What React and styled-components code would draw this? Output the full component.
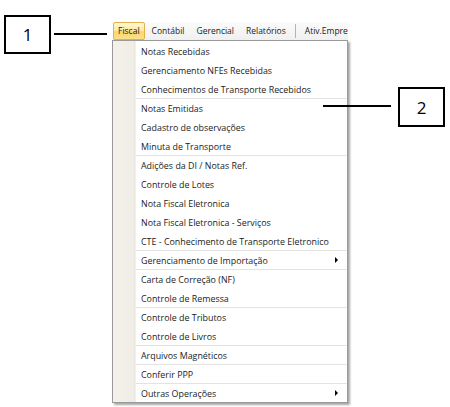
import React from "react";
import styled, { createGlobalStyle } from "styled-components";

const Global = createGlobalStyle`
  html, body { margin: 0; padding: 0; background: #fff; }
  body { font-family: "Open Sans", "Noto Sans", sans-serif; }
`;

const Page = styled.div`
  position: relative;
  width: 450px;
  height: 407px;
  overflow: hidden;
  background: #fff;
`;

const MenuArea = styled.div`
  padding: 22px 0 0 112px;
  width: 236px;
`;

const MenuBar = styled.div`
  display: flex;
  align-items: center;
  gap: 2px;
  height: 18px;
  margin-left: 1px;
  width: 235px;
  overflow: hidden;
  white-space: nowrap;
  background: linear-gradient(#fbfbfb, #f0f0f0);
  font-size: 8.5px;
  color: #1b1b1b;
`;

const BarItem = styled.div`
  box-sizing: border-box;
  height: 18px;
  line-height: 16px;
  padding: 0 4px;
  border: 1px solid ${(p) => (p.$active ? "#e0b24a" : "transparent")};
  border-radius: 2px;
  background: ${(p) =>
    p.$active
      ? "linear-gradient(#fff7d6 0%, #ffe9a6 45%, #fcd56a 55%, #fbe08c 100%)"
      : "transparent"};
`;

const BarSep = styled.div`
  flex: 0 0 1px;
  width: 1px;
  height: 14px;
  margin: 0 2px;
  background: #b4b4b4;
`;

const Dropdown = styled.div`
  box-sizing: border-box;
  width: 236px;
  border: 1px solid #9a9a9a;
  box-shadow: 2px 2px 2px rgba(0, 0, 0, 0.35);
  background: linear-gradient(
    to right,
    #f3f1ea 0px,
    #efede5 21px,
    #e3e1da 22px,
    #ffffff 23px
  );
  font-size: 8.9px;
  color: #1b1b1b;
`;

const Row = styled.div`
  box-sizing: border-box;
  display: flex;
  align-items: center;
  justify-content: space-between;
  height: 19px;
  margin-left: 23px;
  padding: 0 9px 0 5px;
  border-top: 1px solid ${(p) => (p.$sep ? "#e3e3e3" : "transparent")};
  white-space: nowrap;
`;

const Arrow = styled.span`
  width: 0;
  height: 0;
  border-top: 3px solid transparent;
  border-bottom: 3px solid transparent;
  border-left: 3px solid #000;
`;

const CalloutBox = styled.div`
  position: absolute;
  box-sizing: border-box;
  left: ${(p) => p.$x}px;
  top: ${(p) => p.$y}px;
  width: ${(p) => p.$w}px;
  height: ${(p) => p.$h}px;
  border: 2px solid #000;
  background: #fff;
  display: flex;
  align-items: center;
  justify-content: center;
  font-family: "Open Sans", sans-serif;
  font-size: 17px;
  color: #000;
`;

const CalloutLine = styled.div`
  position: absolute;
  left: ${(p) => p.$x}px;
  top: ${(p) => p.$y}px;
  width: ${(p) => p.$w}px;
  height: 2px;
  background: #000;
`;

const items = [
  { t: "Notas Recebidas" },
  { t: "Gerenciamento NFEs Recebidas" },
  { t: "Conhecimentos de Transporte Recebidos" },
  { t: "Notas Emitidas", sep: true },
  { t: "Cadastro de observações" },
  { t: "Minuta de Transporte" },
  { t: "Adições da DI / Notas Ref.", sep: true },
  { t: "Controle de Lotes" },
  { t: "Nota Fiscal Eletronica" },
  { t: "Nota Fiscal Eletronica - Serviços" },
  { t: "CTE - Conhecimento de Transporte Eletronico" },
  { t: "Gerenciamento de Importação", sep: true, sub: true },
  { t: "Carta de Correção (NF)", sep: true },
  { t: "Controle de Remessa" },
  { t: "Controle de Tributos", sep: true },
  { t: "Controle de Livros" },
  { t: "Arquivos Magnéticos", sep: true },
  { t: "Conferir PPP", sep: true },
  { t: "Outras Operações", sep: true, sub: true },
];

export default function App() {
  return (
    <Page>
      <Global />
      <MenuArea>
        <MenuBar>
          <BarItem $active>Fiscal</BarItem>
          <BarItem>Contábil</BarItem>
          <BarItem>Gerencial</BarItem>
          <BarItem>Relatórios</BarItem>
          <BarSep />
          <BarItem>Ativ.Empre</BarItem>
        </MenuBar>
        <Dropdown>
          {items.map((it) => (
            <Row key={it.t} $sep={it.sep}>
              <span>{it.t}</span>
              {it.sub && <Arrow />}
            </Row>
          ))}
        </Dropdown>
      </MenuArea>
      <CalloutBox $x={4} $y={15} $w={47} $h={39}>1</CalloutBox>
      <CalloutLine $x={54} $y={33} $w={53} />
      <CalloutLine $x={323} $y={105} $w={68} />
      <CalloutBox $x={398} $y={87} $w={47} $h={40}>2</CalloutBox>
    </Page>
  );
}
